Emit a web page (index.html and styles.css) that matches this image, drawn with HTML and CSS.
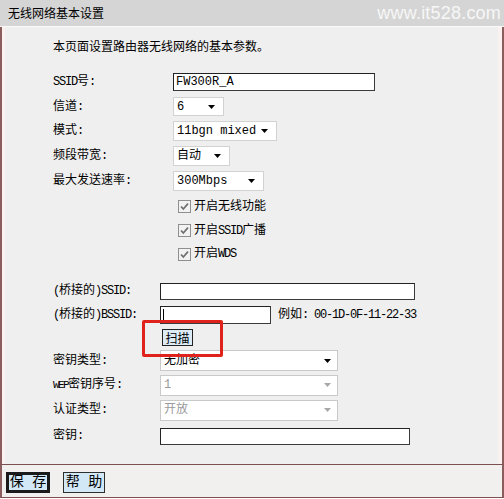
FILE: index.html
```html
<!DOCTYPE html>
<html lang="zh-CN">
<head>
<meta charset="utf-8">
<title>无线网络基本设置</title>
<link rel="stylesheet" href="styles.css">
</head>
<body>
<div class="frame">
  <div class="titlebar">
    <span class="title">无线网络基本设置</span>
    <span class="watermark">www.it528.com</span>
  </div>
  <div class="content">
    <div class="panel">
      <p class="intro">本页面设置路由器无线网络的基本参数。</p>

      <div class="form form-basic">
        <div class="label"><span class="en">SSID</span>号:</div>
        <div class="field"><input class="text w-ssid" type="text" value="FW300R_A"></div>

        <div class="label">信道:</div>
        <div class="field"><div class="select w-channel"><span>6</span><svg class="arrow" width="7" height="4" viewBox="0 0 7 4"><polygon points="0,0 7,0 3.5,4"/></svg></div></div>

        <div class="label">模式:</div>
        <div class="field"><div class="select w-mode"><span>11bgn mixed</span><svg class="arrow" width="7" height="4" viewBox="0 0 7 4"><polygon points="0,0 7,0 3.5,4"/></svg></div></div>

        <div class="label">频段带宽:</div>
        <div class="field"><div class="select w-band"><span>自动</span><svg class="arrow" width="7" height="4" viewBox="0 0 7 4"><polygon points="0,0 7,0 3.5,4"/></svg></div></div>

        <div class="label">最大发送速率:</div>
        <div class="field"><div class="select w-rate"><span>300Mbps</span><svg class="arrow" width="7" height="4" viewBox="0 0 7 4"><polygon points="0,0 7,0 3.5,4"/></svg></div></div>

        <div class="label"></div>
        <div class="field check-field"><svg class="check" width="13" height="13" viewBox="0 0 13 13"><rect x="0.5" y="0.5" width="12" height="12" fill="#f2f2f2" stroke="#8f8f8f"/><path d="M3 6.5 L5.3 9 L10 3.6" fill="none" stroke="#6f6f6f" stroke-width="1.7"/></svg><span>开启无线功能</span></div>

        <div class="label"></div>
        <div class="field check-field"><svg class="check" width="13" height="13" viewBox="0 0 13 13"><rect x="0.5" y="0.5" width="12" height="12" fill="#f2f2f2" stroke="#8f8f8f"/><path d="M3 6.5 L5.3 9 L10 3.6" fill="none" stroke="#6f6f6f" stroke-width="1.7"/></svg><span>开启<span class="en">SSID</span>广播</span></div>

        <div class="label"></div>
        <div class="field check-field"><svg class="check" width="13" height="13" viewBox="0 0 13 13"><rect x="0.5" y="0.5" width="12" height="12" fill="#f2f2f2" stroke="#8f8f8f"/><path d="M3 6.5 L5.3 9 L10 3.6" fill="none" stroke="#6f6f6f" stroke-width="1.7"/></svg><span>开启<span class="en">WDS</span></span></div>
      </div>

      <div class="form form-bridge">
        <div class="label"><span class="en">(</span>桥接的<span class="en">)SSID:</span></div>
        <div class="field"><input class="text w-bssid-name" type="text" value=""></div>

        <div class="label"><span class="en">(</span>桥接的<span class="en">)BSSID:</span></div>
        <div class="field"><span class="caret-wrap"><input class="text w-bssid" type="text" value=""></span><span class="example">例如<span class="en">: 00-1D-0F-11-22-33</span></span></div>

        <div class="label"></div>
        <div class="field"><span class="scan-wrap"><button class="scan" type="button">扫描</button></span></div>

        <div class="label">密钥类型:</div>
        <div class="field"><div class="select wide"><span>无加密</span><svg class="arrow" width="7" height="4" viewBox="0 0 7 4"><polygon points="0,0 7,0 3.5,4"/></svg></div></div>

        <div class="label"><span class="en wep">WEP</span>密钥序号:</div>
        <div class="field"><div class="select wide disabled"><span>1</span><svg class="arrow" width="7" height="4" viewBox="0 0 7 4"><polygon points="0,0 7,0 3.5,4"/></svg></div></div>

        <div class="label">认证类型:</div>
        <div class="field"><div class="select wide disabled"><span>开放</span><svg class="arrow" width="7" height="4" viewBox="0 0 7 4"><polygon points="0,0 7,0 3.5,4"/></svg></div></div>

        <div class="label">密钥:</div>
        <div class="field"><input class="text w-key" type="text" value=""></div>
      </div>
    </div>
  </div>
  <div class="footer">
    <button class="btn btn-primary" type="button">保 存</button>
    <button class="btn" type="button">帮 助</button>
  </div>
</div>
</body>
</html>
```

FILE: styles.css
```css
* { box-sizing: border-box; }

html, body {
  margin: 0;
  padding: 0;
  background: #ffffff;
}

body {
  font-family: "Liberation Mono", "Noto Sans CJK SC", monospace;
  font-size: 12px;
  line-height: 16px;
  color: #000;
}

.frame {
  width: 504px;
  height: 498px;
  display: flex;
  flex-direction: column;
}

/* title bar */
.titlebar {
  height: 27px;
  flex: none;
  background: #d5d5d5;
  border-bottom: 1px solid #fafafa;
  display: flex;
  align-items: center;
  justify-content: space-between;
  padding: 0 3px 0 8px;
}

.title {
  font-family: "Noto Sans CJK SC", sans-serif;
  font-size: 12px;
  line-height: 16px;
}

.watermark {
  font-family: "Liberation Sans", "Noto Sans", sans-serif;
  font-size: 18px;
  color: #f7f7f7;
  letter-spacing: 0.2px;
}

/* main panel */
.content {
  height: 437px;
  flex: none;
  background: #efefef;
  border-left: 2px solid #8b5d5d;
  border-right: 2px solid #8b5d5d;
}

.panel {
  height: 100%;
  border-left: 3px solid #fbf1f1;
  border-right: 4px solid #fbf1f1;
  padding: 7px 0 0 48px;
}

.intro {
  margin: 0;
  height: 24px;
  line-height: 24px;
  font-family: "Noto Sans CJK SC", sans-serif;
}

.en { letter-spacing: -1.2px; font-family: "Liberation Mono", monospace; }
.en.wep { letter-spacing: -1.6px; font-size: 11px; }

.form {
  display: grid;
  align-items: center;
}

.form-basic {
  margin-top: 12px;
  grid-template-columns: 120px auto;
  grid-template-rows: 24px 25px 24px 25px 26px 25px 23px 24px;
}

.form-bridge {
  margin-top: 13px;
  grid-template-columns: 107px auto;
  grid-template-rows: 24px 24px 22px 23px 26px 24px 28px;
}

.label {
  white-space: nowrap;
}

.field {
  display: flex;
  align-items: center;
  white-space: nowrap;
}

/* text inputs */
.text {
  height: 18px;
  margin: 0;
  padding: 0 2px;
  border: 1px solid #3a3a3a;
  border-top-color: #222;
  border-left-color: #222;
  background: #fff;
  font-family: "Liberation Mono", monospace;
  font-size: 12px;
  color: #000;
  outline: none;
}

.w-ssid { width: 202px; }
.w-bssid-name { width: 255px; height: 17px; }
.w-bssid { width: 111px; }
.w-key { width: 250px; height: 17px; }

.caret-wrap {
  position: relative;
  display: inline-block;
  height: 18px;
}

.caret-wrap::after {
  content: "";
  position: absolute;
  left: 3px;
  top: 3px;
  width: 1px;
  height: 12px;
  background: #000;
}

.example {
  margin-left: 7px;
}

/* selects */
.select {
  height: 20px;
  display: inline-flex;
  align-items: center;
  justify-content: space-between;
  padding: 0 8px 0 3px;
  background: #fff;
  border: 1px solid #d2d2d2;
  font-family: "Liberation Mono", "Noto Sans CJK SC", monospace;
  font-size: 12px;
}

.select .arrow { fill: #000; flex: none; }

.w-channel { width: 51px; height: 19px; }
.w-mode { width: 104px; }
.w-band { width: 57px; }
.w-rate { width: 91px; }

.select.wide {
  width: 178px;
  height: 21px;
  padding-right: 6px;
  border-color: #c9c9c9;
}

.select.disabled { color: #9a9a9a; }
.select.disabled .arrow { fill: #a8a8a8; }

/* checkboxes */
.check-field { padding-left: 5px; }
.check { flex: none; margin-right: 3px; }

/* scan button with annotation */
.scan-wrap {
  position: relative;
  display: inline-block;
  margin-left: 2px;
}

.scan {
  width: 31px;
  height: 17px;
  margin: 0;
  padding: 0;
  border: 1px solid #222;
  background: #dcebf6;
  font-family: "Noto Sans CJK SC", sans-serif;
  font-size: 12px;
  line-height: 15px;
  color: #000;
}

.scan-wrap::after {
  content: "";
  position: absolute;
  left: -20px;
  top: -9px;
  width: 75px;
  height: 31px;
  border: 3px solid #e0221c;
  border-radius: 2px;
}

/* footer */
.footer {
  height: 34px;
  flex: none;
  background: #f2efef;
  border-left: 2px solid #8b5d5d;
  border-right: 2px solid #8b5d5d;
  border-top: 1px solid #7d5050;
  border-bottom: 1px solid #7d5050;
  padding: 7px 0 0 4px;
  display: flex;
  align-items: flex-start;
  gap: 13px;
}

.btn {
  height: 21px;
  width: 42px;
  margin: 0;
  padding: 0;
  border: 1px solid #2e2e2e;
  background: #d3e8f6;
  font-family: "Liberation Mono", "Noto Sans CJK SC", monospace;
  font-size: 14px;
  line-height: 17px;
  color: #000;
  white-space: pre;
}

.btn-primary {
  width: 44px;
  border: 3px solid #1a1a1a;
  line-height: 15px;
}
```
